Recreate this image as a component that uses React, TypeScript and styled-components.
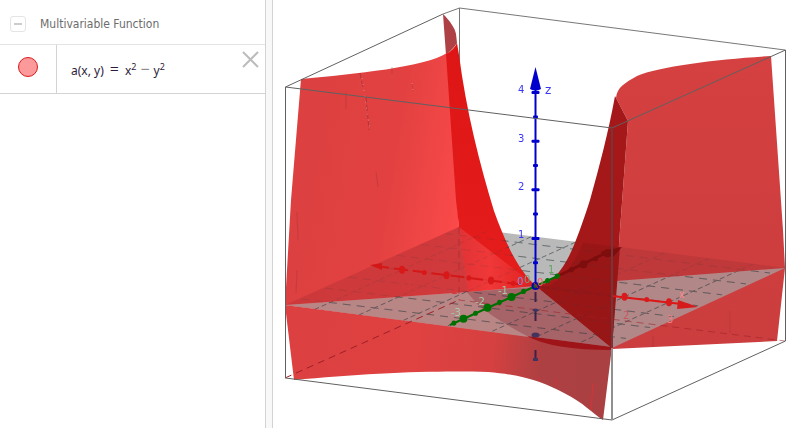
import React from "react";
import styled, { createGlobalStyle } from "styled-components";

const GlobalStyle = createGlobalStyle`
  * { box-sizing: border-box; }
  body { margin: 0; background: #fff; font-family: "Open Sans", "Noto Sans", sans-serif; }
`;

const Page = styled.div`
  display: flex;
  min-height: 100vh;
  padding-bottom: 2px;
  overflow: hidden;
`;

const Sidebar = styled.aside`
  flex: 0 1 266px;
  border-right: 1px solid #d3d3d3;
`;

const Splitter = styled.div`
  flex: 0 0 7px;
  background: #f8f8f8;
  border-right: 1px solid #d3d3d3;
`;

const GroupHeader = styled.header`
  display: flex;
  align-items: center;
  gap: 14px;
  height: 45px;
  padding: 4px 10px 0;
  border-bottom: 1px solid #e4e4e4;
`;

const CollapseButton = styled.button`
  display: grid;
  place-items: center;
  width: 16px;
  height: 16px;
  padding: 0;
  background: #fff;
  border: 1px solid #e4e4e4;
  border-radius: 3px;

  &::before {
    content: "";
    width: 8px;
    height: 2px;
    background: #cccccc;
  }
`;

const GroupTitle = styled.h2`
  margin: 0;
  color: #6c6c6c;
  font-family: "DejaVu Sans Condensed", "Open Sans", sans-serif;
  font-size: 12px;
  font-weight: 400;
  line-height: 18px;
`;

const Row = styled.div`
  display: flex;
  height: 49px;
  border-bottom: 1px solid #d3d3d3;
`;

const MarbleCell = styled.div`
  display: flex;
  justify-content: center;
  flex: 0 0 57px;
  padding-top: 12px;
  border-right: 1px solid #d3d3d3;
`;

const Marble = styled.button`
  width: 20px;
  height: 20px;
  padding: 0;
  background: #fb999b;
  border: 1px solid #dc1a1a;
  border-radius: 50%;
`;

const Formula = styled.div`
  flex: 1;
  display: flex;
  align-items: baseline;
  gap: 4px;
  padding: 14px 0 0 14px;
  color: #2c1c38;
  font-family: "Noto Sans", sans-serif;
  font-size: 12px;
  line-height: 20px;
`;

const Equals = styled.span`
  padding: 0 2px;
  font-size: 16px;
  font-weight: 300;
`;

const Power = styled.sup`
  font-size: 9px;
  line-height: 0;
  vertical-align: 5px;
`;

const Minus = styled.span`
  color: #8c8c8c;
  font-size: 16px;
`;

const CloseButton = styled.button`
  align-self: flex-start;
  display: grid;
  margin: 6px 6px 0 0;
  padding: 0;
  background: none;
  border: 0;
`;

const View = styled.main`
  flex: 1;
  min-width: 0;
`;

const Scene = styled.svg`
  display: block;
  width: 100%;
  height: auto;
`;

const Label = styled.text`
  font-family: "DejaVu Sans", sans-serif;
  font-size: 10px;
`;

const AxisName = styled(Label)`
  font-size: 12px;
`;

const R = 3.65;
const project = (x: number, y: number): [number, number] => [
  535.5 + 44.5 * x + 24 * y,
  286 + 5.4 * x - 10.9 * y,
];

function Segment({ from, to }: { from: [number, number]; to: [number, number] }) {
  return <line x1={from[0]} y1={from[1]} x2={to[0]} y2={to[1]} />;
}

function Grid() {
  return (
    <g stroke="#303c40" strokeWidth="1" opacity=".5">
      {[-3, -2, -1, 0, 1, 2, 3].map((n) => (
        <React.Fragment key={n}>
          <g strokeDasharray="8 6"><Segment from={project(-R, n)} to={project(R, n)} /></g>
          <g strokeDasharray="5 3"><Segment from={project(n, -R)} to={project(n, R)} /></g>
        </React.Fragment>
      ))}
    </g>
  );
}

function Ticks({ values, axis, fill }: { values: number[]; axis: "x" | "y"; fill: string }) {
  return (
    <g fill={fill}>
      {values.map((v) => {
        const [cx, cy] = axis === "x" ? project(v, 0) : project(0, v);
        const whole = Number.isInteger(v);
        return <ellipse key={v} cx={cx} cy={cy} rx={whole ? (axis === "x" ? 3 : 4) : 2.4} ry={whole ? 4 : 2.6} />;
      })}
    </g>
  );
}

function Surface() {
  return (
    <g>
      <path d="M285 305L459 227L785 268L612 348Z" fill="#b9b9b9" />
      <path d="M443 14C450 21 455 28 456 34L457 43C454 48 450 51 446 55Z" fill="#ae4145" />
      <path d="M301 79C355 74 425 67 447 53L457 200L459 227L468 293L535 286L612 348L285 305L291 200Z" fill="url(#leftWall)" />
      <path d="M285 305L612 347L603 420C592 413 584 403 564 393C545 383 525 375 488 372C440 370 365 373 294 380Z" fill="url(#apron)" />
      <path d="M446 54Q454 50 457 43L459 55C466 110 480 165 494 211C506 244 518 270 536 286L468 293L459 227L456 200Z" fill="url(#valley)" />
      <path d="M459 227L536 286L468 293Z" fill="url(#valleyFloor)" />
      <path d="M285 305L459 227L468 292Z" fill="#cb383a" opacity=".88" />
      <path d="M285 305L468 292L535 286L612 348Z" fill="#b98686" />
      <path d="M467 292L541 287L612 347L527 336Q493 318 477 304Z" fill="#a76468" />
      <path d="M628 121L616 98C617 87 625 83 637 76C660 66 720 59 771 56L783 230L785 268L777 341L612 349L620 230Z" fill="url(#rightWall)" />
      <path d="M620 247L785 268L616 281Z" fill="#bf383a" />
      <path d="M616 281L785 268L612 348Z" fill="#b18788" />
      <path d="M615 96L628 121L620 230L612 348L541 290L535 286C562 283 573 252 590 200C600 164 608 134 615 96Z" fill="#a51819" />
      <path d="M583 243L620 247L612 348L541 290C557 283 571 272 583 243Z" fill="#991617" />
      <path d="M527 336L612 347V350Q552 350 527 336Z" fill="#9e1418" />
    </g>
  );
}

function Scratches() {
  return (
    <g fill="none" stroke="#952f38" strokeWidth="1" opacity=".65">
      <path d="M360 73L363 88M366 97L369 130" strokeDasharray="6 2" />
      <path d="M346 92V109M392 67V74" opacity=".5" />
      <path d="M412 83L413 91M376 172L378 187M297 212L298 240M297 270L296 293" opacity=".5" />
      <path d="M362 78L370 131M412 83L413 90" stroke="#f2a8a8" strokeDasharray="1 5" />
      <path d="M593 384L591 410M556 379V386M539 377V381" stroke="#ef2b33" />
      <path d="M730 311V333M653 336V347" opacity=".4" />
    </g>
  );
}

function Plot() {
  const zUnit = 48.6;
  return (
    <Scene viewBox="273 0 527 428" role="img" aria-label="Saddle surface in three dimensions">
      <defs>
        <linearGradient id="leftWall" gradientUnits="userSpaceOnUse" x1="290" y1="200" x2="462" y2="228">
          <stop offset="0" stopColor="#dc4040" />
          <stop offset=".55" stopColor="#e34141" />
          <stop offset="1" stopColor="#fc4a4a" />
        </linearGradient>
        <linearGradient id="apron" gradientUnits="userSpaceOnUse" x1="290" y1="330" x2="606" y2="362">
          <stop offset="0" stopColor="#dc4040" />
          <stop offset=".4" stopColor="#e04141" />
          <stop offset=".64" stopColor="#d64040" />
          <stop offset=".8" stopColor="#ad4042" />
          <stop offset="1" stopColor="#aa4042" />
        </linearGradient>
        <linearGradient id="valley" x1="0" y1="0" x2="0" y2="1">
          <stop offset="0" stopColor="#de1515" />
          <stop offset="1" stopColor="#e61d1d" />
        </linearGradient>
        <linearGradient id="valleyFloor" gradientUnits="userSpaceOnUse" x1="460" y1="265" x2="535" y2="265">
          <stop offset="0" stopColor="#e23336" />
          <stop offset=".4" stopColor="#f03838" />
          <stop offset="1" stopColor="#e02020" />
        </linearGradient>
        <linearGradient id="rightWall" x1="0" y1="0" x2="0" y2="1">
          <stop offset="0" stopColor="#d54040" />
          <stop offset="1" stopColor="#cb3d3e" />
        </linearGradient>
        <clipPath id="openFloor">
          <path d="M500 232L577 241Q566 276 535 286L612 348L285 305L535 286Q514 268 500 232ZM616 281L785 268L612 348Z" />
        </clipPath>
      </defs>

      <path d="M443 14L459.5 8L785 50M459.5 8V230" fill="none" stroke="#777" />
      <Surface />
      <g opacity=".3"><Grid /></g>
      <g clipPath="url(#openFloor)"><Grid /></g>
      <Scratches />

      <g fill="none" stroke="#9d2028" strokeDasharray="7 5">
        <path d="M285 378L459 300" />
        <path d="M459 227V300L785 341" opacity=".55" />
      </g>

      <path d="M375 266L525 285" stroke="#d41818" strokeWidth="2" strokeDasharray="14 5" />
      <path d="M370 265L382 263V270Z" fill="#d41818" />
      <path d="M541 287L612 296" stroke="#8f1719" strokeWidth="2" strokeDasharray="8 3" />
      <path d="M612 296L690 305" stroke="#df1616" strokeWidth="2" />
      <path d="M678 300L698 307L677 309Z" fill="#d51b1b" />
      <Ticks axis="x" values={[-3, -2.5, -2, -1.5, -1, -0.5]} fill="#d91919" />
      <Ticks axis="x" values={[0.5, 1, 1.5]} fill="#931719" />
      <Ticks axis="x" values={[2, 2.5, 3]} fill="#d91b1b" />

      <path d="M450 325L560 275" stroke="#007000" strokeWidth="2" />
      <path d="M560 275L612 250" stroke="#7e0d0e" strokeWidth="3" />
      <path d="M600 252L622 247L613 257Z" fill="#7e0d0e" />
      <Ticks axis="y" values={[-3.4, -3, -2.5, -2, -1.5, -1, -0.5, 0.5, 0.9]} fill="#007000" />
      <Ticks axis="y" values={[1.5, 2, 2.5, 3]} fill="#7e0d0e" />

      <path d="M535.5 292V302M535.5 310V321M535.5 335V336M535.5 350V359" stroke="#3d2148" strokeWidth="2" />
      <g fill="#43345f">
        <ellipse cx="535.5" cy="310" rx="3" ry="1.5" />
        <ellipse cx="535.5" cy="335" rx="4" ry="2.5" />
        <rect x="533" y="358" width="5" height="3" />
      </g>
      <path d="M535.5 88V286" stroke="#0000cd" strokeWidth="2" />
      <path d="M535.5 67L541 89Q535.5 92 530 89Z" fill="#0000cd" />
      <g fill="#0000cd">
        {[0.5, 1, 1.5, 2, 2.5, 3, 3.5, 4].map((z) => (
          <rect key={z} x={z % 1 ? 533 : 531.5} y={287 - z * zUnit - 1.5} width={z % 1 ? 5 : 8} height="3" rx="1" />
        ))}
      </g>
      <circle cx="535.5" cy="286" r="3" fill="#126025" stroke="#0808a8" strokeWidth="2" />
      <path d="M534 283L538 288" stroke="#df2424" />

      <g fill="#3838f4">
        <Label x="518" y="93">4</Label>
        <Label x="518" y="142">3</Label>
        <Label x="518" y="190">2</Label>
        <Label x="518" y="238">1</Label>
        <AxisName x="545" y="94">z</AxisName>
      </g>
      <Label x="517" y="285" fill="#8b8bea">0</Label>
      <Label x="537" y="286" fill="#ff5c5c">0</Label>
      <Label x="524" y="283" fill="#7c9b85">0</Label>
      <g fill="#a9c6a8">
        <Label x="451" y="316">-3</Label>
        <Label x="475" y="305">-2</Label>
        <Label x="498" y="294">-1</Label>
      </g>
      <Label x="548" y="273" fill="#62a462">1</Label>
      <g fill="#d43a40">
        <Label x="402" y="289">-3</Label>
        <Label x="448" y="294">-2</Label>
        <Label x="623" y="319" opacity=".6">2</Label>
      </g>
      <Label x="667" y="323" fill="#f08084">3</Label>
      <Label x="679" y="298" fill="#ff8a8c">x</Label>

      <path d="M443 14L285.5 87L612 128L785.5 50V341L612 420L285.5 378V87" fill="none" stroke="#606060" />
      <path d="M612 128V348" stroke="#743638" strokeWidth="2" />
      <path d="M612 348V420" stroke="#909090" strokeWidth="2" />
    </Scene>
  );
}

export default function App() {
  return (
    <Page>
      <GlobalStyle />
      <Sidebar>
        <GroupHeader>
          <CollapseButton aria-label="Collapse group" />
          <GroupTitle>Multivariable Function</GroupTitle>
        </GroupHeader>
        <Row>
          <MarbleCell><Marble aria-label="Toggle visibility" /></MarbleCell>
          <Formula>
            <span>a(x, y)</span>
            <Equals>=</Equals>
            <span>x<Power>2</Power></span>
            <Minus>−</Minus>
            <span>y<Power>2</Power></span>
          </Formula>
          <CloseButton aria-label="Delete">
            <svg width="17" height="17" viewBox="0 0 17 17" stroke="#bcbcbc" strokeWidth="2" aria-hidden="true">
              <path d="M1 1L16 16M16 1L1 16" />
            </svg>
          </CloseButton>
        </Row>
      </Sidebar>
      <Splitter />
      <View><Plot /></View>
    </Page>
  );
}
